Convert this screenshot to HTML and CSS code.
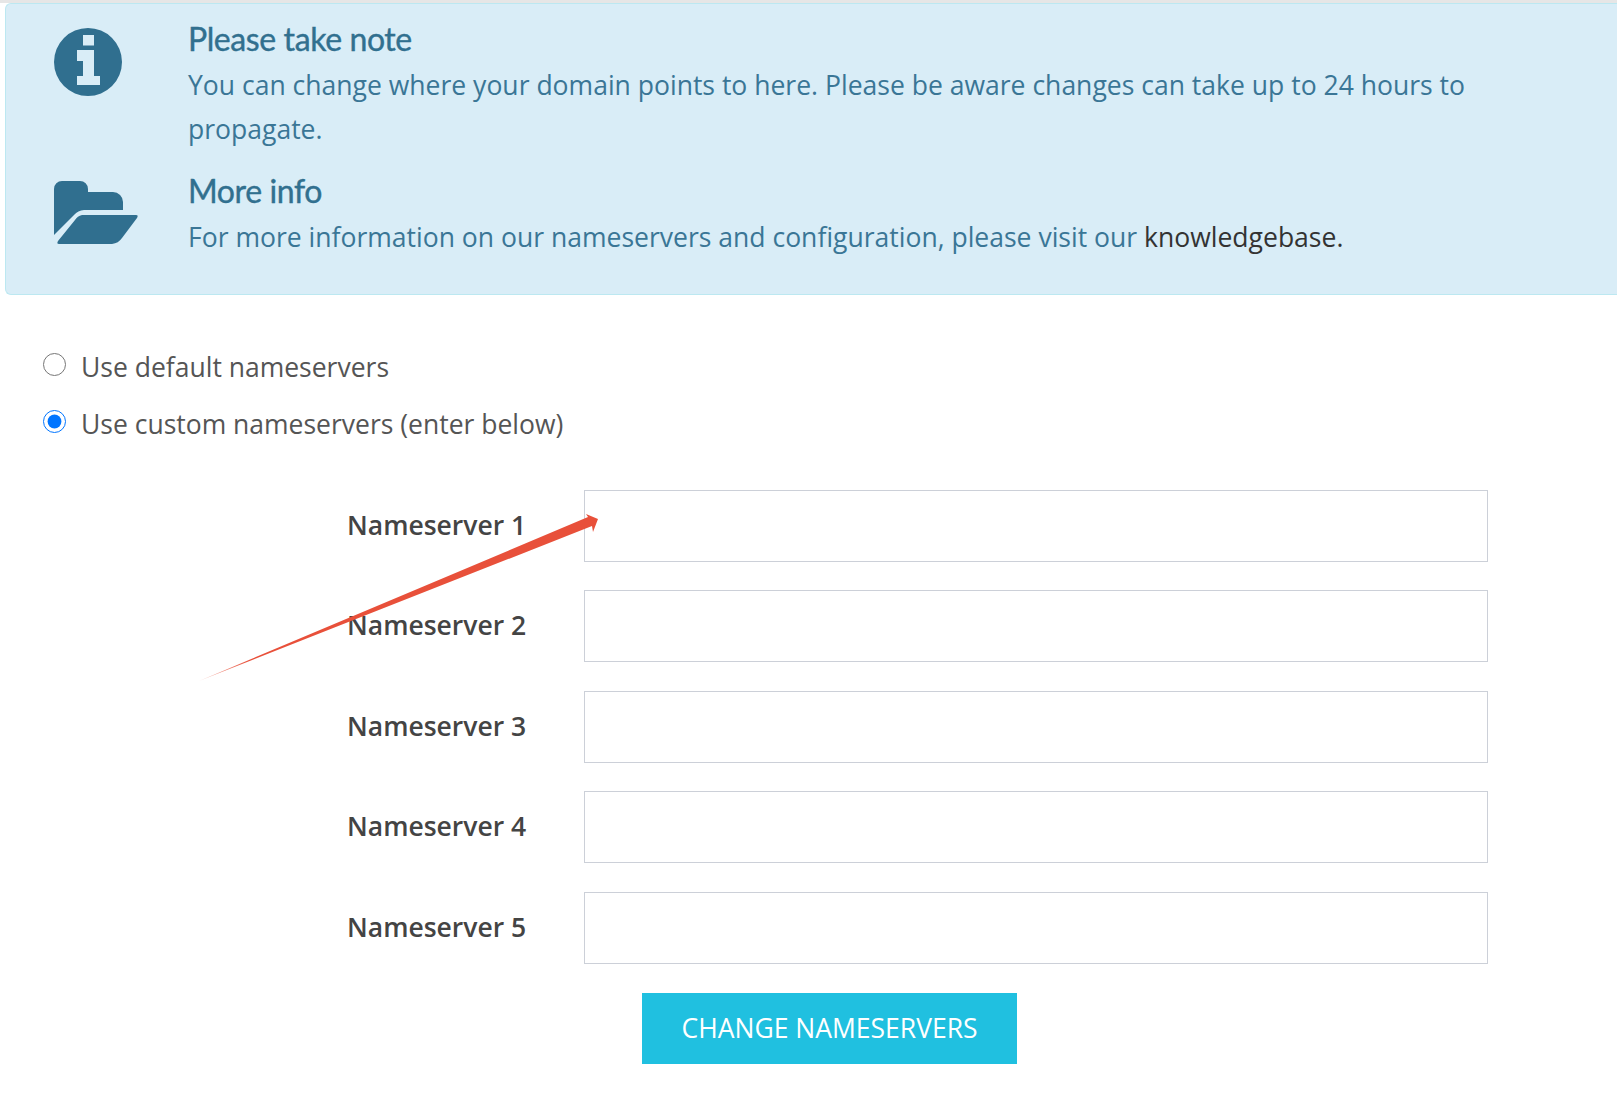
FILE: index.html
```html
<!DOCTYPE html>
<html lang="en">
<head>
  <meta charset="UTF-8" />
  <title>Change Nameservers</title>
  <link rel="stylesheet" href="styles.css">
</head>
<body>

  <div class="top-line"></div>

  <div class="alert-box">
    <div class="alert-row">
      <div class="alert-icon">
        <svg width="68" height="68" viewBox="0 0 68 68">
          <path fill-rule="evenodd" fill="#306f8f" d="M34 0a34 34 0 1 0 0 68a34 34 0 1 0 0-68zM29 7h11v10.500H29zM23 22h17v26h6v9H23v-9h6V33h-6z"/>
        </svg>
      </div>
      <div class="alert-text">
        <h4>Please take note</h4>
        <p>You can change where your domain points to here. Please be aware changes can take up to 24 hours to propagate.</p>
      </div>
    </div>
    <div class="alert-row">
      <div class="alert-icon">
        <svg width="84" height="64" viewBox="0 -1 84 64">
          <path fill="#306f8f" d="M0 54V8a8 8 0 0 1 8-8h18a8 8 0 0 1 8 8v3h25a10 10 0 0 1 10 10v8H30a14 14 0 0 0-10 5z"/>
          <path fill="#306f8f" d="M28 34h54c2 0 2 1 1 3L68 57a14 14 0 0 1-10 6H5c-2 0-2-1-1-3l17-21a11 11 0 0 1 7-5z"/>
        </svg>
      </div>
      <div class="alert-text">
        <h4>More info</h4>
        <p>For more information on our nameservers and configuration, please visit our <a href="#">knowledgebase.</a></p>
      </div>
    </div>
  </div>

  <form class="ns-form">
    <label class="radio-row"><input type="radio" name="nstype" /> Use default nameservers</label>
    <label class="radio-row"><input type="radio" name="nstype" checked /> Use custom nameservers (enter below)</label>

    <div class="ns-fields">
      <div class="ns-row"><label>Nameserver 1</label><input type="text" /></div>
      <div class="ns-row"><label>Nameserver 2</label><input type="text" /></div>
      <div class="ns-row"><label>Nameserver 3</label><input type="text" /></div>
      <div class="ns-row"><label>Nameserver 4</label><input type="text" /></div>
      <div class="ns-row"><label>Nameserver 5</label><input type="text" /></div>
    </div>

    <div class="ns-submit">
      <button type="submit">CHANGE NAMESERVERS</button>
    </div>
  </form>

  <!-- annotation drawn over the screenshot -->
  <svg class="arrow" width="1617" height="1116" viewBox="0 0 1617 1116">
    <defs>
      <linearGradient id="tail" gradientUnits="userSpaceOnUse" x1="199" y1="681" x2="250" y2="660">
        <stop offset="0" stop-color="#e8503a" stop-opacity="0.4"/>
        <stop offset="1" stop-color="#e8503a"/>
      </linearGradient>
    </defs>
    <path fill="url(#tail)" d="M199 681L588 517L586 514L598 519L593 532L592 526z"/>
  </svg>

</body>
</html>
```

FILE: styles.css
```css
body {
  margin: 0;
  background-color: white;
  font-family: 'Open Sans', sans-serif;
  color: #444;
  position: relative;
  overflow-x: hidden;
}

.top-line {
  height: 3px;
  background-color: #e6e6e6;
}

.alert-box {
  margin-left: 5px;
  height: 292px;
  box-sizing: border-box;
  padding: 16px 0 0 48px;
  background-color: #d9edf7;
  border: 1px solid #bce8f1;
  border-width: 1px 0 1px 1px;
  border-radius: 6px 0 0 6px;
  color: #31708f;
}

.alert-row {
  display: flex;
  margin-bottom: 21px;
}

.alert-icon {
  width: 134px;
  padding-top: 8px;
}

.alert-text {
  width: 1290px;
}

.alert-text h4 {
  margin: 0 0 5px 0;
  font-family: 'Lato', sans-serif;
  font-size: 32px;
  font-weight: normal;
  letter-spacing: -0.4px;
  line-height: 38px;
  -webkit-text-stroke: 0.4px #31708f;
}

.alert-text p {
  margin: 0;
  font-size: 26.54px;
  line-height: 44px;
  color: #3a7696;
}

.alert-text a {
  color: #333;
  text-decoration: none;
}

.ns-form {
  padding: 52px 0 0 43px;
  font-size: 26.5px;
}

.radio-row {
  display: flex;
  align-items: center;
  gap: 15px;
  height: 40px;
  margin-bottom: 17px;
  font-size: 26.5px;
  color: #555;
}

.radio-row input {
  width: 23px;
  height: 23px;
  margin: -6px 0 0 0;
}

.ns-fields {
  margin-top: 46px;
  padding-left: 304px;
}

.ns-row {
  display: flex;
  align-items: center;
  height: 72px;
  margin-bottom: 28.4px;
}

.ns-row label {
  width: 237px;
  padding-bottom: 2px;
  font-weight: 600;
}

.ns-row input {
  width: 904px;
  height: 72px;
  box-sizing: border-box;
  border: 1px solid #ccd0d8;
  background-color: white;
}

.ns-submit {
  margin-left: 599px;
  padding-top: 1px;
}

.ns-submit button {
  width: 375px;
  height: 71px;
  border: none;
  background-color: #20c0e0;
  color: white;
  font-family: 'Open Sans', sans-serif;
  font-size: 26.5px;
}

.arrow {
  position: absolute;
  top: 0;
  left: 0;
  pointer-events: none;
}
```
